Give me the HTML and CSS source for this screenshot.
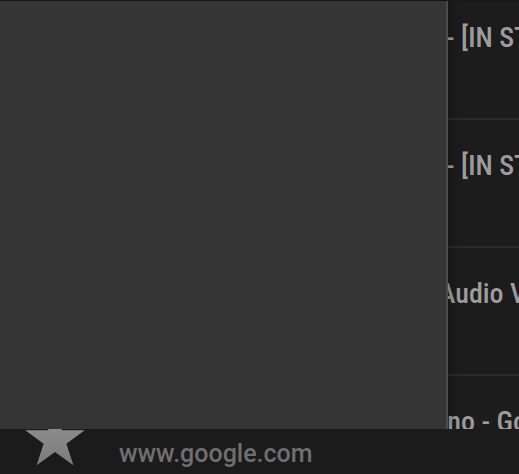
FILE: index.html
```html
<!DOCTYPE html>
<html lang="en">
<head>
    <meta charset="UTF-8">
    <meta name="viewport" content="width=device-width, initial-scale=1.0">
    <title>Playlist</title>
    <link rel="stylesheet" href="styles.css">
</head>
<body>
    <div class="stage">
        <!-- Track list (behind the drawer) -->
        <div class="list">
            <div class="row"><span class="head">Cover Session Live</span><span class="tail">- [IN STUDIO]</span></div>
            <div class="row"><span class="head">Acoustic Set Live</span><span class="tail">- [IN STUDIO]</span></div>
            <div class="row row-audio"><span class="head">Official</span><span class="tail">Audio Video</span></div>
            <div class="row row-cut"><span class="head">Moonlight Pi</span><span class="tail">ano - Google Play</span></div>
        </div>

        <!-- Side drawer -->
        <div class="drawer"></div>
    </div>

    <!-- Bottom bar -->
    <div class="bar">
        <svg class="star" width="64" height="64" viewBox="0 0 64 64">
            <defs>
                <linearGradient id="starFill" x1="0" y1="0" x2="0" y2="1">
                    <stop offset="0" stop-color="#949494"/>
                    <stop offset="1" stop-color="#7c7c7c"/>
                </linearGradient>
            </defs>
            <polygon fill="url(#starFill)" points="32,0.7 39.03,22.32 61.77,22.33 43.37,35.7 50.4,57.32 32,43.96 13.6,57.32 20.63,35.7 2.23,22.33 24.97,22.32"/>
        </svg>
        <span class="url">www.google.com</span>
    </div>
</body>
</html>
```

FILE: styles.css
```css
* {
    margin: 0;
    padding: 0;
    box-sizing: border-box;
}

body {
    width: 519px;
    height: 474px;
    overflow: hidden;
    background-color: #1c1c1c;
    border-top: 1px solid #161616;
    font-family: Roboto, 'Noto Sans', sans-serif;
}

/* Stage: list + drawer */
.stage {
    position: relative;
    height: 428px;
    overflow: hidden;
}

.list {
    margin-top: -9px;
}

.row {
    display: flex;
    height: 128px;
    padding-top: 30px;
    border-bottom: 2px solid #2b2b2b;
    white-space: nowrap;
    font-size: 28px;
    font-weight: 500;
    font-stretch: 85%;
    line-height: 32px;
    color: #9c9c9c;
}

.head {
    flex-shrink: 0;
    width: 446px;
    overflow: hidden;
    text-align: right;
}

.row-audio .head {
    width: 439px;
}

.row-cut .head {
    width: 434px;
}

.tail {
    flex-shrink: 0;
}

.drawer {
    position: absolute;
    top: 0;
    left: 0;
    width: 448px;
    height: 100%;
    background-color: #353535;
    border-right: 2px solid #4c4c4c;
    box-shadow: 3px 0 10px rgba(0, 0, 0, 0.25);
}

/* Bottom bar */
.bar {
    display: flex;
    align-items: flex-start;
    height: 45px;
    overflow: hidden;
    background-color: #1b1b1b;
}

.star {
    flex-shrink: 0;
    margin-top: -21px;
    margin-left: 23px;
    margin-right: 32px;
}

.url {
    padding-top: 10px;
    font-size: 25px;
    line-height: 30px;
    font-weight: 500;
    color: #6f6f6f;
}
```
